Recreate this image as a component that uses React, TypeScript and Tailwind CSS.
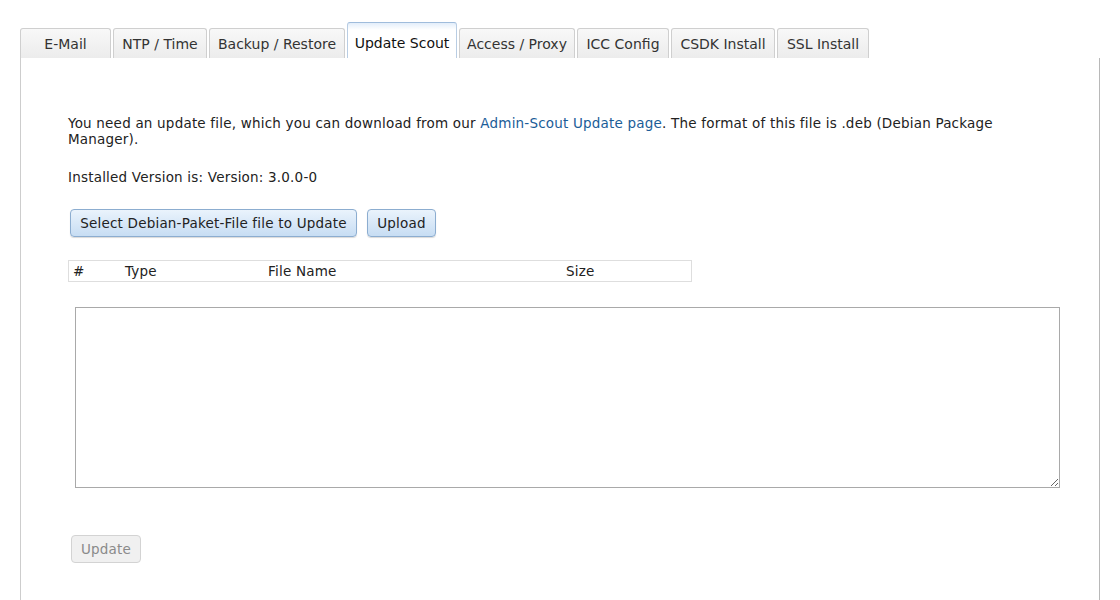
import React from "react";

const tabs = [
  { label: "E-Mail", w: "w-[91px]" },
  { label: "NTP / Time", w: "w-[94px]" },
  { label: "Backup / Restore", w: "w-[136px]" },
  { label: "Update Scout", w: "w-[110px]", active: true },
  { label: "Access / Proxy", w: "w-[116px]" },
  { label: "ICC Config", w: "w-[92px]" },
  { label: "CSDK Install", w: "w-[104px]" },
  { label: "SSL Install", w: "w-[92px]" },
];

export default function App() {
  return (
    <div
      className="w-[1120px] h-[600px] bg-white overflow-hidden text-[13.5px] tracking-[0.2px] text-[#222] leading-[16px]"
      style={{ fontFamily: '"DejaVu Sans", Verdana, sans-serif' }}
    >
      <div className="flex items-end gap-[2px] pl-[20px] pt-[22px] tracking-normal text-[14px]">
        {tabs.map((t) =>
          t.active ? (
            <div
              key={t.label}
              className={`${t.w} h-[36px] flex items-center justify-center pt-[4px] rounded-t-[3px] border border-b-0 border-[#b9cde3] border-t-[#9fbcdc] bg-gradient-to-b from-[#e3eefa] via-white via-[20%] to-white text-[#111]`}
            >
              {t.label}
            </div>
          ) : (
            <div
              key={t.label}
              className={`${t.w} h-[30px] flex items-center justify-center pt-[0px] rounded-t-[3px] border border-b-0 border-[#cfcfcf] bg-gradient-to-b from-[#f8f8f8] to-[#ececec] text-[#333]`}
            >
              {t.label}
            </div>
          )
        )}
      </div>
      <div className="ml-[20px] w-[1080px] h-[560px] border-l border-r border-l-[#cdcdcd] border-r-[#b8b8b8] pl-[47px] pt-[57px] flex flex-col items-start">
        <p className="w-[990px]">
          You need an update file, which you can download from our{" "}
          <a className="text-[#1b5d98]">Admin-Scout Update page</a>. The format of this file is .deb (Debian Package
          Manager).
        </p>
        <p className="mt-[22px]">Installed Version is: Version: 3.0.0-0</p>
        <div className="flex gap-[10px] mt-[24px] ml-[2px]">
          <button className="h-[28px] w-[287px] rounded-[4px] border border-[#8cadd0] bg-gradient-to-b from-[#eaf3fc] to-[#c7ddf3] text-[#222] shadow-[0_1px_1px_rgba(0,0,0,0.15)]">
            Select Debian-Paket-File file to Update
          </button>
          <button className="h-[28px] w-[69px] rounded-[4px] border border-[#8cadd0] bg-gradient-to-b from-[#eaf3fc] to-[#c7ddf3] text-[#222] shadow-[0_1px_1px_rgba(0,0,0,0.15)]">
            Upload
          </button>
        </div>
        <div className="mt-[23px] w-[624px] h-[22px] border border-[#dedede] grid grid-cols-[52px_143px_298px_1fr] items-center pl-[4px] text-[#222]">
          <span>#</span>
          <span>Type</span>
          <span>File Name</span>
          <span>Size</span>
        </div>
        <textarea className="block mt-[25px] ml-[7px] w-[985px] h-[181px] border border-[#a9a9a9] resize" />
        <button
          disabled
          className="block mt-[47px] ml-[3px] h-[28px] w-[70px] rounded-[4px] border border-[#d3d3d3] bg-[#f0f0f0] text-[#8a8a8a]"
        >
          Update
        </button>
      </div>
    </div>
  );
}
